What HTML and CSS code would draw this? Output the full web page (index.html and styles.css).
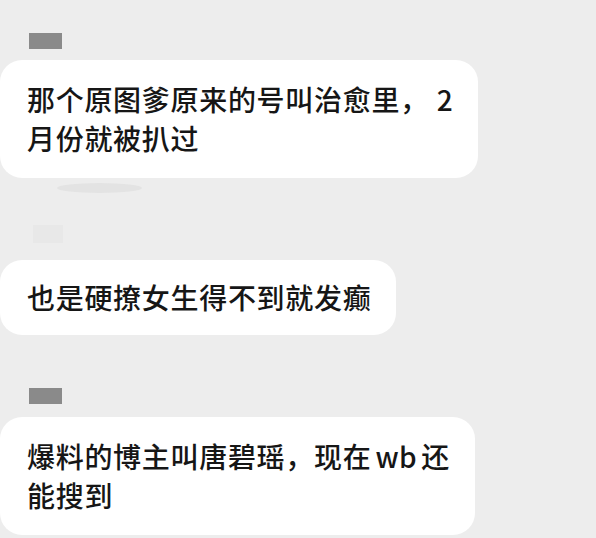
FILE: index.html
```html
<!DOCTYPE html>
<html lang="zh-CN">
<head>
<meta charset="utf-8">
<link rel="stylesheet" href="styles.css">
</head>
<body>
<div class="chat">
  <div class="name name-first"></div>
  <div class="bubble bubble-first">那个原图爹原来的号叫治愈里，<span class="latin latin-num">2</span><br>月份就被扒过</div>
  <div class="smudge"></div>
  <div class="name name-faint"></div>
  <div class="bubble bubble-second">也是硬撩女生得不到就发癫</div>
  <div class="name name-third"></div>
  <div class="bubble bubble-third">爆料的博主叫唐碧瑶，现在<span class="latin">wb</span>还<br>能搜到</div>
</div>
</body>
</html>
```

FILE: styles.css
```css
html, body {
  margin: 0;
  padding: 0;
  background: #ededed;
}
body {
  width: 596px;
  height: 538px;
  overflow: hidden;
}
.chat {
  display: flex;
  flex-direction: column;
  align-items: flex-start;
}
.name {
  width: 33px;
  height: 16px;
  margin-left: 29px;
  background: #8a8a8a;
}
.name-first {
  margin-top: 33px;
}
.name-faint {
  margin-top: 32px;
  margin-left: 33px;
  width: 30px;
  height: 18px;
  background: #e8e8e8;
}
.name-third {
  margin-top: 53px;
}
.smudge {
  margin-top: 5px;
  margin-left: 57px;
  width: 85px;
  height: 10px;
  border-radius: 50%;
  background: #e3e3e3;
}
.bubble {
  background: #ffffff;
  color: #161616;
  font-family: "Noto Sans CJK SC", sans-serif;
  font-size: 28px;
  font-weight: 500;
  line-height: 39px;
  letter-spacing: 0.7px;
  padding: 20px 25px 20px 27px;
  border-radius: 22px;
  white-space: nowrap;
}
.latin {
  margin: 0 4px;
  letter-spacing: 0.5px;
}
.latin-num {
  margin: 0 0 0 8px;
}
.bubble-first {
  margin-top: 11px;
}
.bubble-second {
  margin-top: 17px;
  padding-top: 18px;
  padding-bottom: 18px;
}
.bubble-third {
  margin-top: 13px;
}
```
